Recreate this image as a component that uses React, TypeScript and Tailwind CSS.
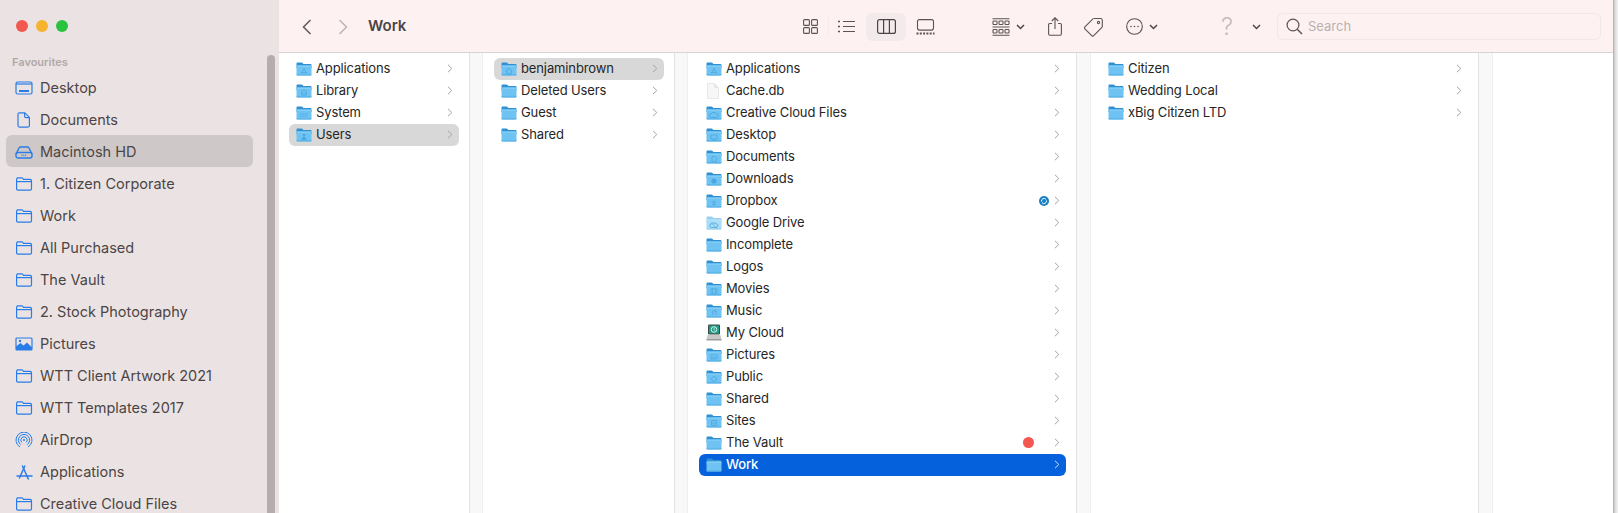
const sideBlue = "#2a7ce6";

function SideFolder() {
  return (
    <svg width="18" height="14" viewBox="0 0 18 14" fill="none" stroke={sideBlue} strokeWidth="1.2">
      <path d="M1.6 3V2.2C1.6 1.3 2.2.8 3 .8h3.6c.6 0 .9.2 1.3.7l.6.8h6.6c.9 0 1.4.5 1.4 1.4v8c0 .9-.5 1.4-1.4 1.4H3c-.9 0-1.4-.5-1.4-1.4V3z" />
      <path d="M1.6 4.6h14.8" />
    </svg>
  );
}

function SideIcon({ name }: { name: string }) {
  if (name === "desktop") {
    return (
      <svg width="18" height="14" viewBox="0 0 18 14" fill="none" stroke={sideBlue} strokeWidth="1.2">
        <rect x="1" y="1" width="16" height="12" rx="1.5" />
        <path d="M1 3h16" />
        <path d="M4 10h10" strokeWidth="2" />
      </svg>
    );
  }
  if (name === "doc") {
    return (
      <svg width="14" height="16" viewBox="0 0 14 16" fill="none" stroke={sideBlue} strokeWidth="1.2">
        <path d="M2.4.8h5.4l4.6 4.6v8.2c0 .9-.5 1.5-1.4 1.5H2.4c-.9 0-1.4-.6-1.4-1.5V2.3C1 1.4 1.5.8 2.4.8z" />
        <path d="M7.6 1v3.2c0 .9.5 1.4 1.4 1.4h3.2" />
      </svg>
    );
  }
  if (name === "hd") {
    return (
      <svg width="18" height="13" viewBox="0 0 18 13" fill="none" stroke={sideBlue} strokeWidth="1.4">
        <path d="M1 8l3-6c.3-.7.8-1 1.5-1h7c.7 0 1.2.3 1.500 1l3 6" />
        <rect x="1" y="6.500" width="16" height="5.500" rx="2" />
        <path d="M6.500 9.400h5" strokeDasharray="1 .8" />
      </svg>
    );
  }
  if (name === "pictures") {
    return (
      <svg width="18" height="14" viewBox="0 0 18 14">
        <rect x="1" y="1" width="16" height="12" rx="1" fill="none" stroke={sideBlue} strokeWidth="1.2" />
        <path d="M1 13V9.500L5.500 6l3 2.600L12 5.500l5 5V13z" fill={sideBlue} />
        <circle cx="5" cy="4" r="1.200" fill={sideBlue} />
      </svg>
    );
  }
  if (name === "airdrop") {
    return (
      <svg width="18" height="16" viewBox="0 0 18 16" fill="none" stroke={sideBlue} strokeWidth="1">
        <path d="M5 15A8 8 0 1 1 13 15" />
        <path d="M5.900 12.700A5.600 5.600 0 1 1 12.100 12.700" />
        <path d="M6.800 10.400A3.200 3.200 0 1 1 11.200 10.400" />
        <circle cx="9" cy="8" r="1" fill={sideBlue} stroke="none" />
      </svg>
    );
  }
  if (name === "apps") {
    return (
      <svg width="17" height="15" viewBox="0 0 17 15" fill="none" stroke={sideBlue} strokeWidth="1.500" strokeLinecap="round">
        <path d="M8.800 1L3.500 13" />
        <path d="M6.500 1l5.800 13" />
        <path d="M1 11h15" />
      </svg>
    );
  }
  return <SideFolder />;
}

// tinted mark printed on some of the folders
function FolderMark({ mark }: { mark: string }) {
  const c = "#4aa8df";
  if (mark === "apps") return <path d="M8 6.500L5.500 11.500M8 6.500l2.500 5M5 10.500h6" stroke={c} strokeWidth=".8" fill="none" />;
  if (mark === "library") return <path d="M5 11h6M5.800 8v3M8 8v3M10.200 8v3M5 7.800L8 6l3 1.800" stroke={c} strokeWidth=".8" fill="none" />;
  if (mark === "system") return <path d="M4 8h8M4 10h8" stroke={c} strokeWidth="1" strokeDasharray="1 .6" fill="none" />;
  if (mark === "users") return <path d="M5.500 12c0-2 1-3 2.500-3s2.500 1 2.500 3zM8 8.600a1.400 1.400 0 1 0 0-2.800 1.400 1.400 0 0 0 0 2.800z" fill={c} />;
  if (mark === "home") return <path d="M4.800 9L8 6.200 11.200 9M5.800 8.400V12h4.400V8.400" stroke={c} strokeWidth=".9" fill="none" />;
  if (mark === "cc") return <path d="M5.500 11.500a2 2 0 0 1 0-4c.7-1.500 3.800-1.500 4.800 0a2 2 0 0 1 0 4z" stroke={c} strokeWidth=".9" fill="none" />;
  if (mark === "desktop") return <path d="M5 7h6v4H5zM6 12h4" stroke={c} strokeWidth=".8" fill="none" />;
  if (mark === "docs") return <path d="M6 6.500h3l1.200 1.200v4H6z" stroke={c} strokeWidth=".8" fill="none" />;
  if (mark === "downloads") return <circle cx="8" cy="9" r="2.600" fill={c} />;
  if (mark === "dropbox") return <path d="M8 6.500v5M6 7.500l2 1.300 2-1.300M6 10l2 1.300 2-1.300" stroke={c} strokeWidth=".8" fill="none" />;
  if (mark === "drive") return <path d="M5.500 11.500a1.800 1.800 0 0 1 0-3.600c.7-1.300 3.600-1.300 4.600 0a1.800 1.800 0 0 1 0 3.600zM5 6.500l6 6" stroke={c} strokeWidth=".8" fill="none" />;
  if (mark === "movies") return <path d="M5 6.800h6v4.800H5zM6.500 6.800v4.800M9.500 6.800v4.800" stroke={c} strokeWidth=".7" fill="none" />;
  if (mark === "music") return <path d="M6.800 11V7.200l3.200-.7V10.400" stroke={c} strokeWidth=".9" fill="none" />;
  if (mark === "pictures") return <path d="M5 7h6v4H5zM5 10.500l2-1.500 1.500 1 1-1 1.500 1.500" stroke={c} strokeWidth=".7" fill="none" />;
  if (mark === "public") return <path d="M8 6l3 3-3 3-3-3z" stroke={c} strokeWidth=".8" fill="none" />;
  if (mark === "sites") return <path d="M5.500 6.500h5v5h-5zM6.500 8l1.500 2.500L9.500 8" stroke={c} strokeWidth=".8" fill="none" />;
  return null;
}

function FolderIcon({ mark }: { mark?: string }) {
  const pale = mark === "drive";
  return (
    <svg width="16" height="14" viewBox="0 0 16 14">
      <path d="M.5 4V1.700C.5 1 1 .5 1.700.5h3.700c.5 0 .8.200 1.100.5l.9 1h6.900c.7 0 1.200.5 1.200 1.200V6H.5z" fill={pale ? "#9ccfee" : "#2f90d2"} />
      <rect x=".5" y="3.600" width="15" height="9.900" rx="1.200" fill={pale ? "#a9dcf6" : "#6fc3f2"} />
      <path d="M.5 4.600c0-.6.500-1 1.200-1h12.600c.7 0 1.200.4 1.200 1v.2H.5z" fill={pale ? "#b9e3f8" : "#86cff6"} />
      <path d="M1.700 13.500h12.600c.7 0 1.200-.4 1.200-1v-.3H.5v.3c0 .6.500 1 1.200 1z" fill={pale ? "#9dd2ee" : "#5cb2e6"} />
      {mark && <FolderMark mark={mark} />}
    </svg>
  );
}

function FileIcon() {
  return (
    <svg width="14" height="16" viewBox="0 0 14 16">
      <path d="M1.500.5h7l4 4v11h-11z" fill="#f7f7f7" stroke="#e0e0e0" strokeWidth=".7" />
      <path d="M8.500.5v4h4" fill="#e9e9e9" stroke="#e0e0e0" strokeWidth=".7" />
    </svg>
  );
}

function CloudDriveIcon() {
  return (
    <svg width="16" height="17" viewBox="0 0 16 17">
      <rect x="2" y=".5" width="12" height="10" rx="1" fill="#3e4a46" />
      <rect x="3" y="1.500" width="10" height="8" fill="#1e9c85" />
      <circle cx="8" cy="5.500" r="2.800" fill="none" stroke="#d8f5ec" strokeWidth="1" />
      <path d="M8 4v1.700l1.200.7" fill="none" stroke="#d8f5ec" strokeWidth=".8" />
      <path d="M1.500 11h13l1 5H.5z" fill="#c8c8c8" />
      <path d="M.5 15h15v1.500H.5z" fill="#9c9c9c" />
    </svg>
  );
}

function Chevron({ white }: { white?: boolean }) {
  return (
    <svg width="6" height="9" viewBox="0 0 6 9" fill="none" stroke={white ? "#cfe0fa" : "#a3a3a3"} strokeWidth="1">
      <path d="M1 .8L4.800 4.500 1 8.200" />
    </svg>
  );
}

interface RowData {
  name: string;
  mark?: string;
  kind?: "file" | "cloud";
  state?: "gray" | "blue";
  dropbox?: boolean;
  dot?: boolean;
}

function Row({ row }: { row: RowData }) {
  const bg = row.state === "gray" ? "bg-[#d8d8d8]" : row.state === "blue" ? "bg-[#0561dc]" : "";
  const text = row.state === "blue" ? "text-white font-medium" : "text-[#262626]";
  return (
    <div className={`flex h-[22px] items-center rounded-md pb-px pl-[7px] pr-[6px] ${bg}`}>
      <div className="flex w-[20px] shrink-0 justify-start">
        {row.kind === "file" ? <FileIcon /> : row.kind === "cloud" ? <CloudDriveIcon /> : <FolderIcon mark={row.mark} />}
      </div>
      <span className={`flex-1 text-[13px] leading-none tracking-[-0.12px] ${text}`}>{row.name}</span>
      {row.dot && <div className="mr-[20px] h-[11px] w-[11px] rounded-full bg-[#f4574f]" />}
      {row.dropbox && (
        <svg className="mr-[5px]" width="10" height="10" viewBox="0 0 10 10">
          <circle cx="5" cy="5" r="5" fill="#1b7fc4" />
          <path d="M2.500 5.500A2.600 2.600 0 0 1 7 3.300M7.500 4.500A2.600 2.600 0 0 1 3 6.700" fill="none" stroke="#fff" strokeWidth="1" />
        </svg>
      )}
      <Chevron white={row.state === "blue"} />
    </div>
  );
}

function Column({ rows, width, left = "pl-[10px]" }: { rows: RowData[]; width: string; left?: string }) {
  return (
    <div className={`${width} ${left} flex shrink-0 flex-col bg-white pr-[10px] pt-[5px]`}>
      {rows.map((r) => (
        <Row key={r.name} row={r} />
      ))}
    </div>
  );
}

function Gutter({ width }: { width: string }) {
  return <div className={`${width} shrink-0 border-x border-l-[#e3e3e3] border-r-[#efefef] bg-[#f8f8f8]`} />;
}

const sideItems = [
  { name: "Desktop", icon: "desktop" },
  { name: "Documents", icon: "doc" },
  { name: "Macintosh HD", icon: "hd", selected: true },
  { name: "1. Citizen Corporate", icon: "folder" },
  { name: "Work", icon: "folder" },
  { name: "All Purchased", icon: "folder" },
  { name: "The Vault", icon: "folder" },
  { name: "2. Stock Photography", icon: "folder" },
  { name: "Pictures", icon: "pictures" },
  { name: "WTT Client Artwork 2021", icon: "folder" },
  { name: "WTT Templates 2017", icon: "folder" },
  { name: "AirDrop", icon: "airdrop" },
  { name: "Applications", icon: "apps" },
  { name: "Creative Cloud Files", icon: "folder" },
];

const col1: RowData[] = [
  { name: "Applications", mark: "apps" },
  { name: "Library", mark: "library" },
  { name: "System", mark: "system" },
  { name: "Users", mark: "users", state: "gray" },
];

const col2: RowData[] = [
  { name: "benjaminbrown", mark: "home", state: "gray" },
  { name: "Deleted Users" },
  { name: "Guest" },
  { name: "Shared" },
];

const col3: RowData[] = [
  { name: "Applications", mark: "apps" },
  { name: "Cache.db", kind: "file" },
  { name: "Creative Cloud Files", mark: "cc" },
  { name: "Desktop", mark: "desktop" },
  { name: "Documents", mark: "docs" },
  { name: "Downloads", mark: "downloads" },
  { name: "Dropbox", mark: "dropbox", dropbox: true },
  { name: "Google Drive", mark: "drive" },
  { name: "Incomplete" },
  { name: "Logos" },
  { name: "Movies", mark: "movies" },
  { name: "Music", mark: "music" },
  { name: "My Cloud", kind: "cloud" },
  { name: "Pictures", mark: "pictures" },
  { name: "Public", mark: "public" },
  { name: "Shared" },
  { name: "Sites", mark: "sites" },
  { name: "The Vault", dot: true },
  { name: "Work", state: "blue" },
];

const col4: RowData[] = [{ name: "Citizen" }, { name: "Wedding Local" }, { name: "xBig Citizen LTD" }];

function SmallChevron() {
  return (
    <svg width="9" height="6" viewBox="0 0 9 6" fill="none" stroke="#4d4747" strokeWidth="1.500">
      <path d="M1 1l3.500 3.500L8 1" />
    </svg>
  );
}

const tool = { fill: "none", stroke: "#5a5454", strokeWidth: 1.1 };

function Toolbar() {
  return (
    <div className="flex h-[53px] shrink-0 items-center border-b border-[#d8d4d4] bg-[#fef1f1] pt-px">
      <svg className="ml-[23px]" width="10" height="16" viewBox="0 0 10 16" fill="none" stroke="#5e5858" strokeWidth="1.500">
        <path d="M8.500 1L1.500 8l7 7" />
      </svg>
      <svg className="ml-[26px]" width="10" height="16" viewBox="0 0 10 16" fill="none" stroke="#bdb6b6" strokeWidth="1.500">
        <path d="M1.500 1l7 7-7 7" />
      </svg>
      <span className="ml-[20px] w-[435px] text-[15px] font-semibold text-[#4b4545]">Work</span>

      <svg width="15" height="15" viewBox="0 0 15 15" {...tool}>
        <rect x=".6" y=".6" width="5.800" height="5.800" rx="1" />
        <rect x="8.600" y=".6" width="5.800" height="5.800" rx="1" />
        <rect x=".6" y="8.600" width="5.800" height="5.800" rx="1" />
        <rect x="8.600" y="8.600" width="5.800" height="5.800" rx="1" />
      </svg>
      <div className="ml-[10px] h-[20px] w-px bg-[#f5ebeb]" />
      <svg className="ml-[9px]" width="17" height="13" viewBox="0 0 17 13" {...tool}>
        <path d="M5 1.500h12M5 6.500h12M5 11.500h12" />
        <path d="M0 1.500h2M0 6.500h2M0 11.500h2" strokeWidth="1.400" />
      </svg>
      <div className="ml-[11px] flex h-[28px] w-[40px] items-center justify-center rounded-md bg-[#f3ebeb]">
        <svg width="19" height="15" viewBox="0 0 19 15" fill="none" stroke="#4a4444" strokeWidth="1.200">
          <rect x=".6" y=".6" width="17.800" height="13.800" rx="2" />
          <path d="M6.600 .6v13.800M12.400 .6v13.800" />
        </svg>
      </div>
      <svg className="ml-[10px]" width="19" height="16" viewBox="0 0 19 16" {...tool}>
        <rect x="1.500" y=".6" width="16" height="10.500" rx="2" />
        <path d="M.5 14.500h18" strokeWidth="1.800" strokeDasharray="2 1.300" />
      </svg>

      <svg className="ml-[57px]" width="18" height="18" viewBox="0 0 18 18" {...tool}>
        <path d="M.5 .8h17M.5 17.300h17M.5 9h17" />
        <rect x="1" y="3" width="4" height="3.500" rx=".8" />
        <rect x="7" y="3" width="4" height="3.500" rx=".8" />
        <rect x="13" y="3" width="4" height="3.500" rx=".8" />
        <rect x="1" y="11.500" width="4" height="3.500" rx=".8" />
        <rect x="7" y="11.500" width="4" height="3.500" rx=".8" />
        <rect x="13" y="11.500" width="4" height="3.500" rx=".8" />
      </svg>
      <div className="ml-[6px]"><SmallChevron /></div>

      <svg className="ml-[23px]" width="14" height="19" viewBox="0 0 14 19" {...tool}>
        <path d="M4 6.500H1.800C1 6.500.6 7 .6 7.800v9c0 .9.4 1.400 1.200 1.400h10.400c.8 0 1.200-.5 1.200-1.400v-9c0-.8-.4-1.300-1.200-1.300H10" />
        <path d="M7 12V1M3.800 4L7 .8 10.200 4" />
      </svg>
      <svg className="ml-[21px]" width="21" height="20" viewBox="0 0 21 20" {...tool}>
        <path d="M11.500 1.500h6c1 0 1.800.8 1.800 1.800v6c0 .6-.2 1-.6 1.400l-8 8c-.6.6-1.500.6-2 0l-6.800-6.800c-.6-.6-.6-1.500 0-2.100l8-8c.4-.3.700-.3.600-.3z" />
        <circle cx="15.500" cy="5.500" r="1.100" />
      </svg>
      <svg className="ml-[22px]" width="17" height="17" viewBox="0 0 17 17" {...tool}>
        <circle cx="8.500" cy="8.500" r="7.800" />
        <circle cx="5" cy="8.500" r=".8" fill="#5a5454" stroke="none" />
        <circle cx="8.500" cy="8.500" r=".8" fill="#5a5454" stroke="none" />
        <circle cx="12" cy="8.500" r=".8" fill="#5a5454" stroke="none" />
      </svg>
      <div className="ml-[6px]"><SmallChevron /></div>

      <span className="ml-[63px] w-[13px] text-[24px] font-light leading-none text-[#c2bbbb]">?</span>
      <div className="ml-[18px]"><SmallChevron /></div>

      <div className="ml-[16px] flex h-[27px] w-[324px] items-center rounded-md border border-[#f3e6e6] pl-[8px]">
        <svg width="17" height="17" viewBox="0 0 17 17" fill="none" stroke="#5a5454" strokeWidth="1.200">
          <circle cx="7" cy="7" r="5.900" />
          <path d="M11.300 11.300L16 16" strokeWidth="1.500" />
        </svg>
        <span className="ml-[5px] text-[13px] text-[#b8b1b1]">Search</span>
      </div>
    </div>
  );
}

export default function App() {
  return (
    <div className="flex h-[513px] w-[1618px] overflow-hidden bg-white font-['Inter',sans-serif] antialiased">
      <div className="flex h-full w-[279px] shrink-0 flex-col bg-[#ebe3e3]">
        <div className="flex h-[52px] shrink-0 items-center gap-2 pl-4">
          <div className="h-3 w-3 rounded-full bg-[#f1584f]" />
          <div className="h-3 w-3 rounded-full bg-[#f6b32d]" />
          <div className="h-3 w-3 rounded-full bg-[#2ac33f]" />
        </div>
        <div className="flex min-h-0 flex-1">
          <div className="w-[267px] shrink-0 pl-[6px] pr-[14px]">
            <div className="pl-[6px] pt-[3px] text-[11px] font-semibold leading-[14px] text-[#b0a8a8]">Favourites</div>
            <div className="mt-[2px]">
              {sideItems.map((item) => (
                <div
                  key={item.name}
                  className={`flex h-[32px] items-center rounded-md pt-[2px] ${item.selected ? "bg-[#cfc8c8]" : ""}`}
                >
                  <div className="flex w-[34px] shrink-0 justify-center pl-[2px]">
                    <SideIcon name={item.icon} />
                  </div>
                  <span className="text-[14.5px] leading-none text-[#4b4545]">{item.name}</span>
                </div>
              ))}
            </div>
          </div>
          <div className="mt-[3px] h-full w-2 shrink-0 rounded-t-full bg-[#b5adad]" />
        </div>
      </div>

      <div className="flex h-full w-[1334px] shrink-0 flex-col">
        <Toolbar />
        <div className="flex min-h-0 flex-1">
          <Column rows={col1} width="w-[190px]" />
          <Gutter width="w-[14px]" />
          <Column rows={col2} width="w-[191px]" left="pl-[11px]" />
          <Gutter width="w-[14px]" />
          <Column rows={col3} width="w-[388px]" left="pl-[11px]" />
          <Gutter width="w-[15px]" />
          <Column rows={col4} width="w-[387px]" left="pl-[10px]" />
          <Gutter width="w-[15px]" />
          <div className="flex-1 bg-white" />
        </div>
      </div>

      <div className="h-full w-[5px] shrink-0 border-l border-[#b8b4b4] bg-gradient-to-r from-[#d0cccc] to-[#f5f5f5]" />
    </div>
  );
}
